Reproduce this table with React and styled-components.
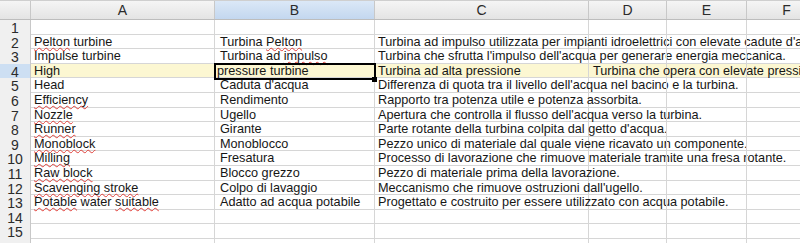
import React from "react";
import styled, { createGlobalStyle, css } from "styled-components";

const Global = createGlobalStyle`
  html, body { margin: 0; padding: 0; background: #fff; }
  body { font-family: "Liberation Sans", Arial, sans-serif; overflow: hidden; }
`;

const COLS = "31px 184px 160px 214px 78px 80px 80px";
const ROW_H = 14.6;

const Sheet = styled.div`
  width: 800px;
  height: 243px;
  overflow: hidden;
  background: #fff;
`;

const HeaderRow = styled.div`
  display: grid;
  grid-template-columns: ${COLS};
  height: 20px;
  box-sizing: border-box;
  border-top: 1px solid #cfcfcf;
  border-bottom: 1px solid #bdbdbd;
  background: linear-gradient(#f5f5f5, #e4e4e4);
`;

const ColHead = styled.div`
  box-sizing: border-box;
  border-right: 1px solid #c8c8c8;
  font-size: 14px;
  color: #2b2b2b;
  display: flex;
  align-items: center;
  justify-content: center;
  ${(p) =>
    p.$active &&
    css`
      background: linear-gradient(#dbe8f7, #c3d7ef);
    `}
`;

const Row = styled.div`
  display: grid;
  grid-template-columns: ${COLS};
  height: ${ROW_H}px;
  box-sizing: border-box;
  border-bottom: 1px solid #d6d6d6;
  background: ${(p) => (p.$hl ? "#fcf7d2" : "transparent")};
`;

const RowHead = styled.div`
  box-sizing: border-box;
  border-right: 1px solid #c8c8c8;
  background: ${(p) => (p.$active ? "#cddff3" : "#f0f0f0")};
  font-size: 14px;
  color: #2b2b2b;
  text-align: center;
  padding-top: 1px;
  line-height: ${ROW_H}px;
`;

const Cell = styled.div`
  position: relative;
  box-sizing: border-box;
  border-right: 1px solid #d6d6d6;
  font-size: 12.7px;
  color: #161616;
  white-space: pre;
  overflow: visible;
  padding-left: ${(p) => p.$pad || 3}px;
  padding-top: 1px;
  line-height: ${ROW_H - 1}px;
  ${(p) =>
    p.$selected &&
    css`
      outline: 2px solid #000;
      outline-offset: -1px;
      z-index: 2;
    `}
`;

const Handle = styled.span`
  position: absolute;
  right: -3px;
  bottom: -3px;
  width: 5px;
  height: 5px;
  background: #000;
`;

const Typo = styled.span`
  text-decoration: underline wavy #e0403a;
  text-decoration-thickness: 1px;
  text-underline-offset: 1px;
  text-decoration-skip-ink: none;
`;

const T = ({ t }) => {
  const parts = t.split(/(\[[^\]]+\])/);
  return parts.map((p, i) =>
    p.startsWith("[") ? <Typo key={i}>{p.slice(1, -1)}</Typo> : <React.Fragment key={i}>{p}</React.Fragment>
  );
};

const rows = [
  ["", "", "", ""],
  ["[Pelton] turbine", "Turbina [Pelton]", "Turbina ad impulso utilizzata per impianti idroelettrici con elevate cadute d'acqua.", ""],
  ["Impulse turbine", "Turbina ad [impulso]", "Turbina che sfrutta l'impulso dell'acqua per generare energia meccanica.", ""],
  ["High", "pressure turbine", "Turbina ad alta pressione", "Turbina che opera con elevate pressioni."],
  ["Head", "Caduta d'acqua", "Differenza di quota tra il livello dell'acqua nel bacino e la turbina.", ""],
  ["[Efficiency]", "Rendimento", "Rapporto tra potenza utile e potenza assorbita.", ""],
  ["[Nozzle]", "Ugello", "Apertura che controlla il flusso dell'acqua verso la turbina.", ""],
  ["[Runner]", "Girante", "Parte rotante della turbina colpita dal getto d'acqua.", ""],
  ["[Monoblock]", "Monoblocco", "Pezzo unico di materiale dal quale viene ricavato un componente.", ""],
  ["[Milling]", "Fresatura", "Processo di lavorazione che rimuove materiale tramite una fresa rotante.", ""],
  ["[Raw block]", "Blocco grezzo", "Pezzo di materiale prima della lavorazione.", ""],
  ["[Scavenging stroke]", "Colpo di lavaggio", "Meccanismo che rimuove ostruzioni dall'ugello.", ""],
  ["[Potable] water [suitable]", "Adatto ad acqua potabile", "Progettato e costruito per essere utilizzato con acqua potabile.", ""],
  ["", "", "", ""],
  ["", "", "", ""],
  ["", "", "", ""],
];

export default function App() {
  return (
    <Sheet>
      <Global />
      <HeaderRow>
        <ColHead />
        <ColHead>A</ColHead>
        <ColHead $active>B</ColHead>
        <ColHead>C</ColHead>
        <ColHead>D</ColHead>
        <ColHead>E</ColHead>
        <ColHead>F</ColHead>
      </HeaderRow>
      {rows.map((r, i) => {
        const n = i + 1;
        const sel = n === 4;
        return (
          <Row key={n} $hl={sel}>
            <RowHead $active={sel}>{n <= 15 ? n : ""}</RowHead>
            <Cell><T t={r[0]} /></Cell>
            <Cell $selected={sel} $pad={sel ? 2 : 5}>
              <T t={r[1]} />
              {sel && <Handle />}
            </Cell>
            <Cell><T t={r[2]} /></Cell>
            <Cell $pad={4}><T t={r[3]} /></Cell>
            <Cell />
            <Cell />
          </Row>
        );
      })}
    </Sheet>
  );
}
